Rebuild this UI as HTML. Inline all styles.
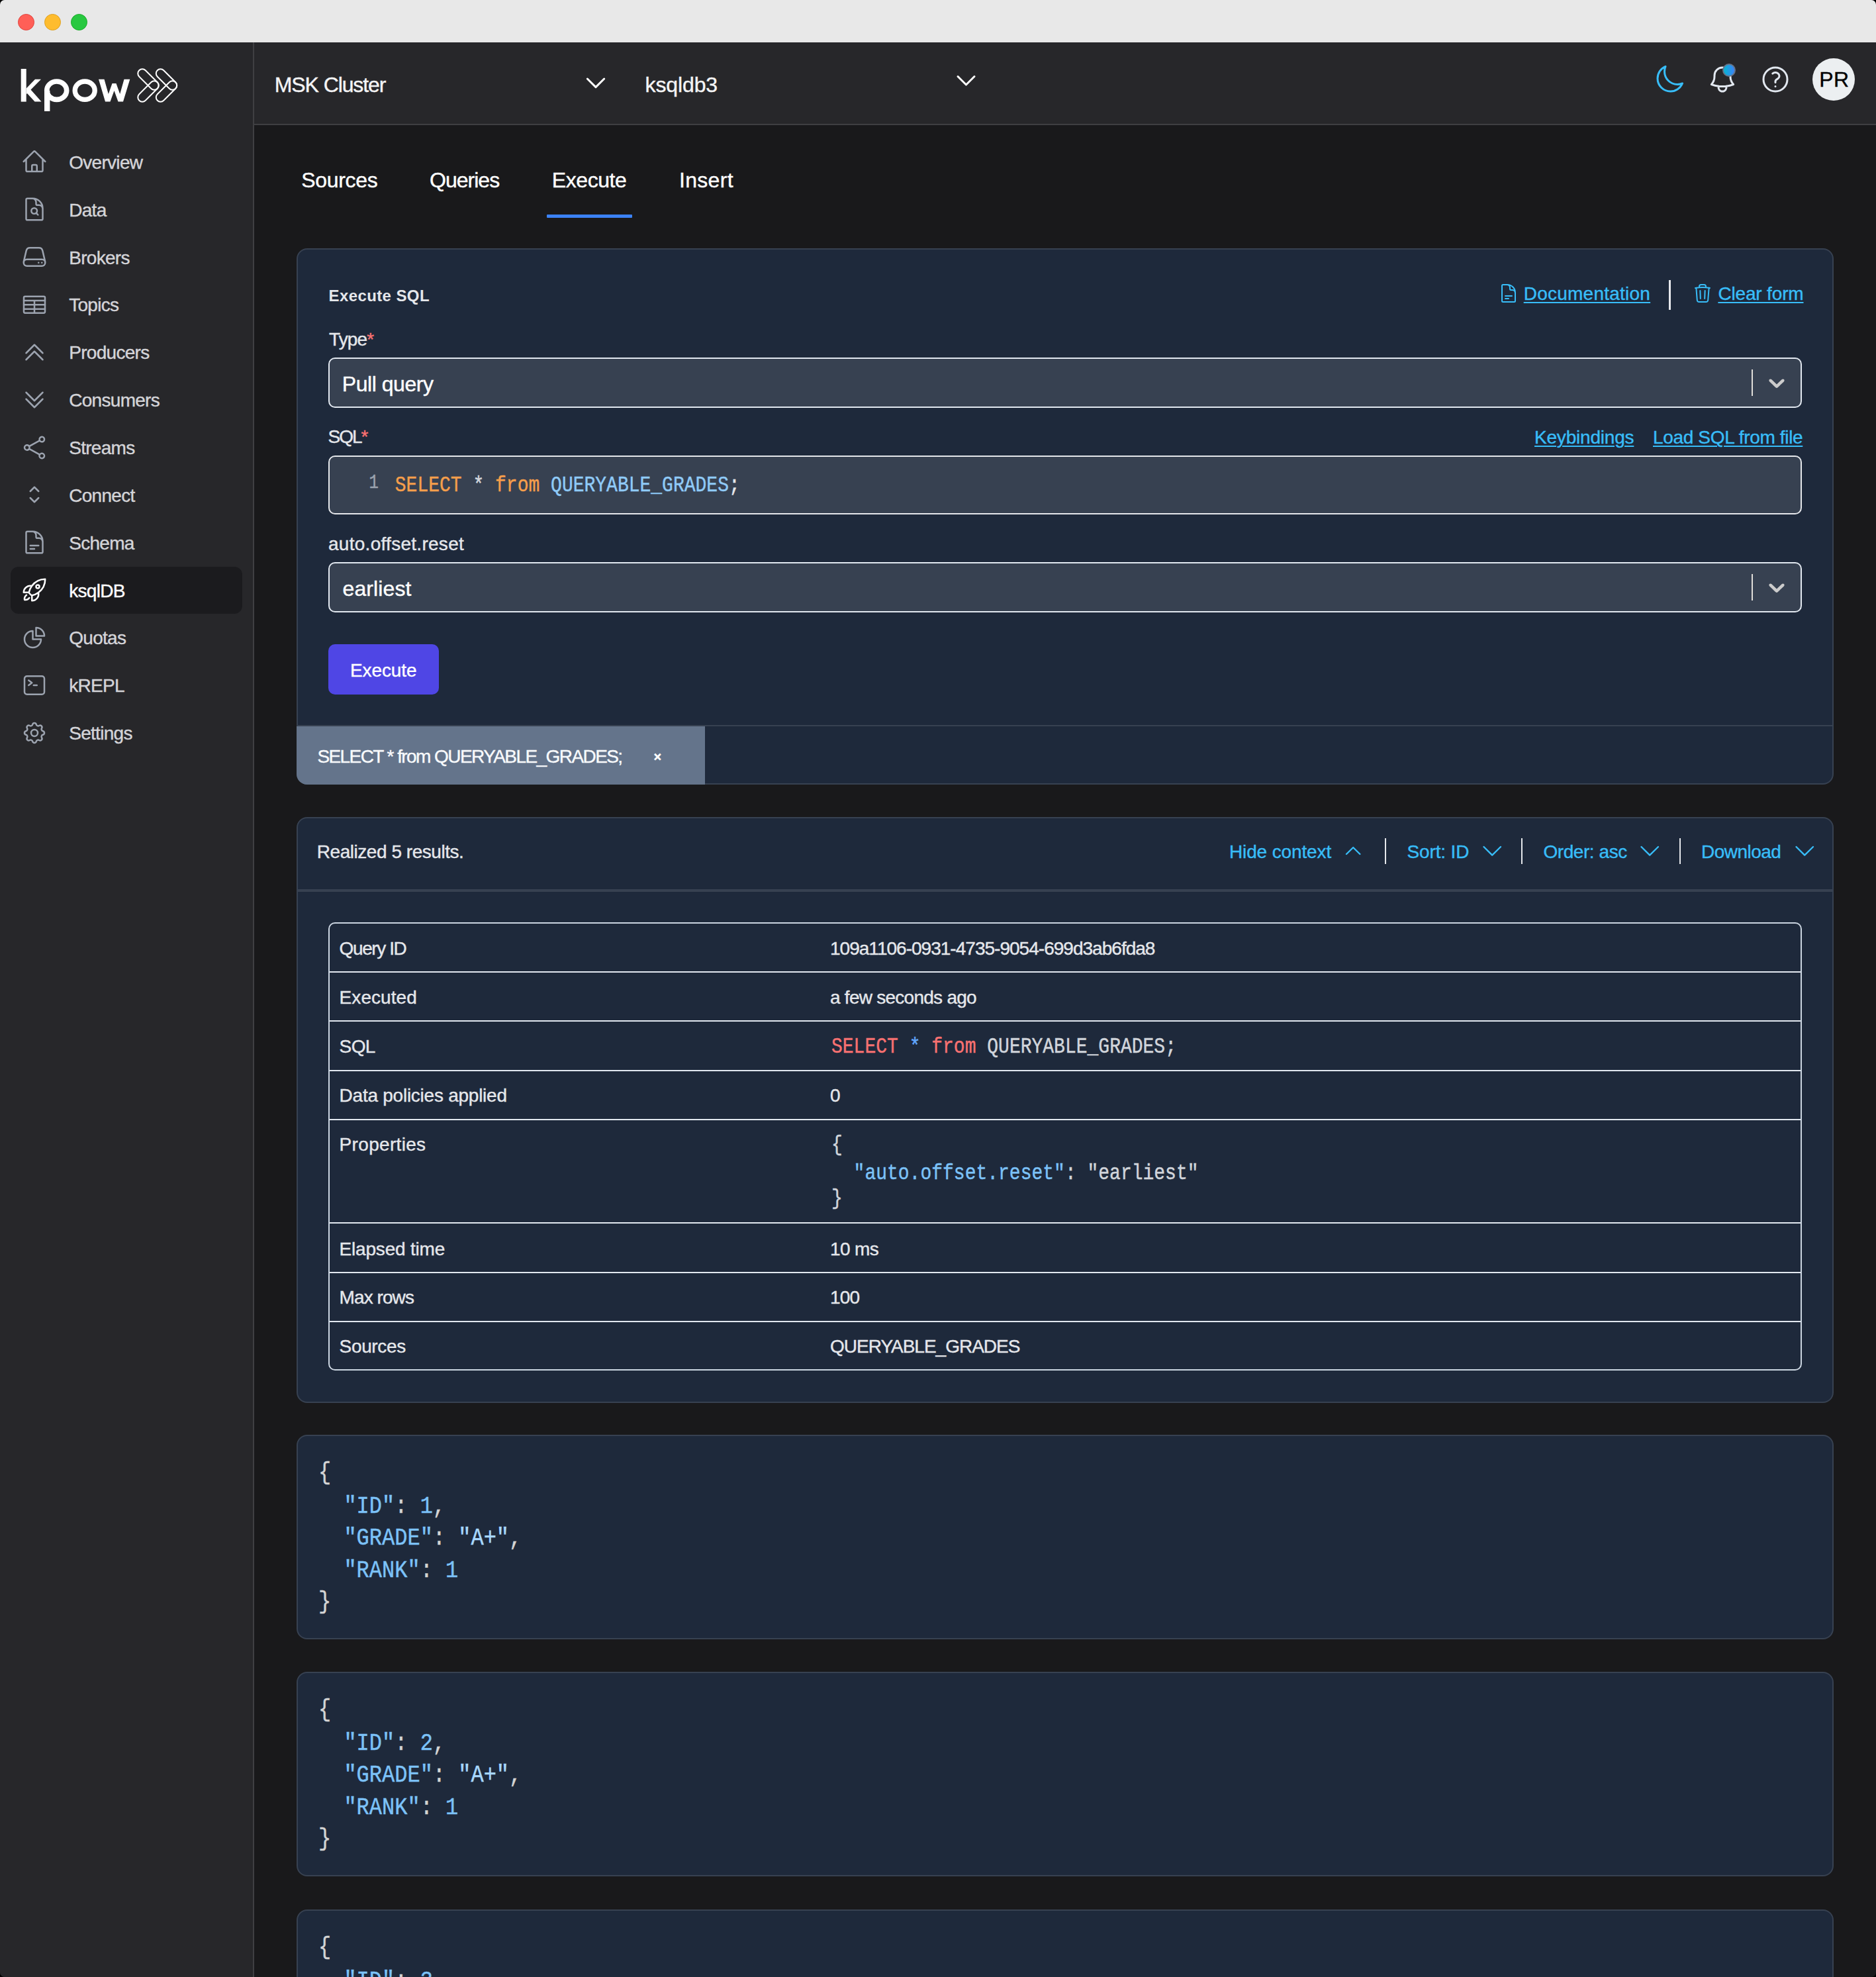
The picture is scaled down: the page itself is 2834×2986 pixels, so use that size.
<!DOCTYPE html>
<html><head><meta charset="utf-8"><title>kpow ksqlDB</title>
<style>
html,body{margin:0;padding:0;}
body{width:2834px;height:2986px;overflow:hidden;background:#000;position:relative;font-family:'Liberation Sans', sans-serif;}
.t{position:absolute;white-space:pre;line-height:1;-webkit-text-stroke:0.4px currentColor;}
.r{position:absolute;box-sizing:border-box;}
</style></head><body>
<div class="r" style="left:0px;top:0px;width:2834px;height:2986px;background:#19191b;border-radius:7px;overflow:hidden;"></div><div class="r" style="left:0px;top:0px;width:2834px;height:64px;background:#e8e8e8;border-radius:7px 7px 0 0;"></div><div class="r" style="left:27px;top:21.0px;width:25px;height:25.0px;background:#ff5f57;border-radius:50%;border:1px solid #e0443e;"></div><div class="r" style="left:67px;top:21.0px;width:25px;height:25.0px;background:#febc2e;border-radius:50%;border:1px solid #dea123;"></div><div class="r" style="left:107px;top:21.0px;width:25px;height:25.0px;background:#28c840;border-radius:50%;border:1px solid #1aab29;"></div><div class="r" style="left:0px;top:64px;width:384px;height:2922px;background:#27272a;border-right:2px solid #3f3f42;border-bottom-left-radius:7px;"></div><div class="r" style="left:384px;top:64px;width:2450px;height:125px;background:#27272a;border-bottom:2px solid #3f3f42;"></div><div class="r" style="left:16px;top:856px;width:350px;height:71px;background:#1b1b1e;border-radius:12px;"></div><div class="t" style="left:104.2px;top:231.9px;font-size:28px;color:#d4d4d8;font-weight:400;font-family:'Liberation Sans', sans-serif;letter-spacing:-0.70px;">Overview</div><div class="t" style="left:104.2px;top:303.7px;font-size:28px;color:#d4d4d8;font-weight:400;font-family:'Liberation Sans', sans-serif;letter-spacing:-0.70px;">Data</div><div class="t" style="left:104.2px;top:375.6px;font-size:28px;color:#d4d4d8;font-weight:400;font-family:'Liberation Sans', sans-serif;letter-spacing:-0.70px;">Brokers</div><div class="t" style="left:104.2px;top:447.4px;font-size:28px;color:#d4d4d8;font-weight:400;font-family:'Liberation Sans', sans-serif;letter-spacing:-0.70px;">Topics</div><div class="t" style="left:104.2px;top:519.3px;font-size:28px;color:#d4d4d8;font-weight:400;font-family:'Liberation Sans', sans-serif;letter-spacing:-0.70px;">Producers</div><div class="t" style="left:104.2px;top:591.1px;font-size:28px;color:#d4d4d8;font-weight:400;font-family:'Liberation Sans', sans-serif;letter-spacing:-0.70px;">Consumers</div><div class="t" style="left:104.2px;top:663.0px;font-size:28px;color:#d4d4d8;font-weight:400;font-family:'Liberation Sans', sans-serif;letter-spacing:-0.70px;">Streams</div><div class="t" style="left:104.2px;top:734.8px;font-size:28px;color:#d4d4d8;font-weight:400;font-family:'Liberation Sans', sans-serif;letter-spacing:-0.70px;">Connect</div><div class="t" style="left:104.2px;top:806.7px;font-size:28px;color:#d4d4d8;font-weight:400;font-family:'Liberation Sans', sans-serif;letter-spacing:-0.70px;">Schema</div><div class="t" style="left:104.2px;top:878.5px;font-size:28px;color:#ffffff;font-weight:400;font-family:'Liberation Sans', sans-serif;letter-spacing:-0.70px;">ksqlDB</div><div class="t" style="left:104.2px;top:950.4px;font-size:28px;color:#d4d4d8;font-weight:400;font-family:'Liberation Sans', sans-serif;letter-spacing:-0.70px;">Quotas</div><div class="t" style="left:104.2px;top:1022.2px;font-size:28px;color:#d4d4d8;font-weight:400;font-family:'Liberation Sans', sans-serif;letter-spacing:-0.70px;">kREPL</div><div class="t" style="left:104.2px;top:1094.1px;font-size:28px;color:#d4d4d8;font-weight:400;font-family:'Liberation Sans', sans-serif;letter-spacing:-0.70px;">Settings</div><div class="t" style="left:414.8px;top:111.9px;font-size:32px;color:#f4f4f5;font-weight:400;font-family:'Liberation Sans', sans-serif;letter-spacing:-1.10px;">MSK Cluster</div><div class="t" style="left:974.6px;top:111.9px;font-size:32px;color:#f4f4f5;font-weight:400;font-family:'Liberation Sans', sans-serif;letter-spacing:-0.13px;">ksqldb3</div><div class="t" style="left:455.3px;top:255.5px;font-size:32px;color:#ffffff;font-weight:400;font-family:'Liberation Sans', sans-serif;letter-spacing:-0.33px;">Sources</div><div class="t" style="left:649px;top:255.5px;font-size:32px;color:#ffffff;font-weight:400;font-family:'Liberation Sans', sans-serif;letter-spacing:-0.98px;">Queries</div><div class="t" style="left:833.8px;top:255.5px;font-size:32px;color:#ffffff;font-weight:400;font-family:'Liberation Sans', sans-serif;letter-spacing:-0.43px;">Execute</div><div class="t" style="left:1026px;top:255.5px;font-size:32px;color:#ffffff;font-weight:400;font-family:'Liberation Sans', sans-serif;letter-spacing:0.30px;">Insert</div><div class="r" style="left:826px;top:324px;width:129px;height:5px;background:#3b82f6;border-radius:1px;"></div><div class="r" style="left:448px;top:375px;width:2322px;height:810px;background:#1e293b;border:2px solid #374151;border-radius:16px;overflow:hidden;"></div><div class="t" style="left:496.5px;top:434.7px;font-size:24px;color:#e5e7eb;font-weight:700;font-family:'Liberation Sans', sans-serif;letter-spacing:0.40px;-webkit-text-stroke:0;">Execute SQL</div><div class="t" style="left:2301.7px;top:430.3px;font-size:28px;color:#38bdf8;font-weight:400;font-family:'Liberation Sans', sans-serif;letter-spacing:0.24px;text-decoration:underline;text-underline-offset:3px;text-decoration-thickness:2px;">Documentation</div><div class="r" style="left:2521px;top:423px;width:3px;height:45px;background:#e5e7eb;"></div><div class="t" style="left:2595.4px;top:430.3px;font-size:28px;color:#38bdf8;font-weight:400;font-family:'Liberation Sans', sans-serif;letter-spacing:-0.16px;text-decoration:underline;text-underline-offset:3px;text-decoration-thickness:2px;">Clear form</div><div class="t" style="left:497px;top:499.3px;font-size:28px;color:#e5e7eb;font-weight:400;font-family:'Liberation Sans', sans-serif;letter-spacing:-0.85px;">Type<span style="color:#f87171">*</span></div><div class="r" style="left:496px;top:540px;width:2226px;height:76px;background:#374151;border:2px solid #e2e8f0;border-radius:10px;"></div><div class="t" style="left:516.8px;top:563.9px;font-size:32px;color:#ffffff;font-weight:400;font-family:'Liberation Sans', sans-serif;letter-spacing:-0.46px;">Pull query</div><div class="r" style="left:2646px;top:558px;width:2px;height:40px;background:#e0ded9;"></div><div class="t" style="left:495.5px;top:646.3px;font-size:28px;color:#e5e7eb;font-weight:400;font-family:'Liberation Sans', sans-serif;letter-spacing:-2.00px;">SQL<span style="color:#f87171">*</span></div><div class="t" style="left:2318px;top:647.3px;font-size:28px;color:#38bdf8;font-weight:400;font-family:'Liberation Sans', sans-serif;letter-spacing:-0.20px;text-decoration:underline;text-underline-offset:3px;text-decoration-thickness:2px;">Keybindings</div><div class="t" style="left:2497px;top:647.3px;font-size:28px;color:#38bdf8;font-weight:400;font-family:'Liberation Sans', sans-serif;letter-spacing:-0.34px;text-decoration:underline;text-underline-offset:3px;text-decoration-thickness:2px;">Load SQL from file</div><div class="r" style="left:496px;top:688px;width:2226px;height:89px;background:#374151;border:2px solid #e5e7eb;border-radius:10px;"></div><div class="t" style="left:557.5px;top:718.6px;font-size:24px;color:#9ca3af;font-weight:400;font-family:'Liberation Mono', monospace;letter-spacing:0.00px;transform:scaleY(1.2);transform-origin:0 18.38px;">1</div><div class="t" style="left:596.8px;top:721.1px;font-size:28px;color:#e5e7eb;font-weight:400;font-family:'Liberation Mono', monospace;letter-spacing:0.00px;transform:scaleY(1.2);transform-origin:0 21.45px;"><span style="color:#f59e4b">SELECT</span> <span style="color:#d1d5db">*</span> <span style="color:#f59e4b">from</span> <span style="color:#8fcaf7">QUERYABLE_GRADES</span>;</div><div class="t" style="left:496px;top:808.3px;font-size:28px;color:#e5e7eb;font-weight:400;font-family:'Liberation Sans', sans-serif;letter-spacing:0.28px;">auto.offset.reset</div><div class="r" style="left:496px;top:849px;width:2226px;height:76px;background:#374151;border:2px solid #e2e8f0;border-radius:10px;"></div><div class="t" style="left:517.6px;top:872.9px;font-size:32px;color:#ffffff;font-weight:400;font-family:'Liberation Sans', sans-serif;letter-spacing:0.09px;">earliest</div><div class="r" style="left:2646px;top:867px;width:2px;height:40px;background:#e0ded9;"></div><div class="r" style="left:496px;top:973px;width:167px;height:76px;background:#4f46e5;border-radius:10px;"></div><div class="t" style="left:529px;top:998.8px;font-size:28px;color:#ffffff;font-weight:400;font-family:'Liberation Sans', sans-serif;letter-spacing:-0.10px;">Execute</div><div class="r" style="left:450px;top:1095px;width:2318px;height:2px;background:#374151;"></div><div class="r" style="left:448px;top:1097px;width:617px;height:88px;background:#64748b;border-bottom-left-radius:16px;"></div><div class="t" style="left:479.4px;top:1129.3px;font-size:28px;color:#f8fafc;font-weight:400;font-family:'Liberation Sans', sans-serif;letter-spacing:-1.57px;">SELECT * from QUERYABLE_GRADES;</div><div class="t" style="left:987.6px;top:1133.1px;font-size:20px;color:#ffffff;font-weight:700;font-family:'Liberation Sans', sans-serif;letter-spacing:0.00px;">×</div><div class="r" style="left:448px;top:1234px;width:2322px;height:885px;background:#1e293b;border:2px solid #374151;border-radius:16px;"></div><div class="t" style="left:478.8px;top:1272.9px;font-size:28px;color:#e5e7eb;font-weight:400;font-family:'Liberation Sans', sans-serif;letter-spacing:-0.46px;">Realized 5 results.</div><div class="r" style="left:450px;top:1343px;width:2318px;height:4px;background:#374151;"></div><div class="t" style="left:1857px;top:1273.3px;font-size:28px;color:#38bdf8;font-weight:400;font-family:'Liberation Sans', sans-serif;letter-spacing:-0.13px;">Hide context</div><div class="t" style="left:2125.5px;top:1273.3px;font-size:28px;color:#38bdf8;font-weight:400;font-family:'Liberation Sans', sans-serif;letter-spacing:-0.14px;">Sort: ID</div><div class="t" style="left:2331.4px;top:1273.3px;font-size:28px;color:#38bdf8;font-weight:400;font-family:'Liberation Sans', sans-serif;letter-spacing:-0.42px;">Order: asc</div><div class="t" style="left:2570px;top:1273.3px;font-size:28px;color:#38bdf8;font-weight:400;font-family:'Liberation Sans', sans-serif;letter-spacing:-0.53px;">Download</div><div class="r" style="left:2091.5px;top:1266px;width:2.0px;height:39px;background:#e5e7eb;"></div><div class="r" style="left:2297.5px;top:1266px;width:2.0px;height:39px;background:#e5e7eb;"></div><div class="r" style="left:2536.5px;top:1266px;width:2.0px;height:39px;background:#e5e7eb;"></div><div class="r" style="left:496px;top:1393px;width:2226px;height:677px;border:2px solid #cbd5e1;border-radius:10px;"></div><div class="r" style="left:498px;top:1467px;width:2222px;height:2px;background:#e2e8f0;"></div><div class="r" style="left:498px;top:1541px;width:2222px;height:2px;background:#e2e8f0;"></div><div class="r" style="left:498px;top:1616px;width:2222px;height:2px;background:#e2e8f0;"></div><div class="r" style="left:498px;top:1690px;width:2222px;height:2px;background:#e2e8f0;"></div><div class="r" style="left:498px;top:1846px;width:2222px;height:2px;background:#e2e8f0;"></div><div class="r" style="left:498px;top:1921px;width:2222px;height:2px;background:#e2e8f0;"></div><div class="r" style="left:498px;top:1995px;width:2222px;height:2px;background:#e2e8f0;"></div><div class="t" style="left:512.6px;top:1419.3px;font-size:28px;color:#e5e7eb;font-weight:400;font-family:'Liberation Sans', sans-serif;letter-spacing:-1.41px;">Query ID</div><div class="t" style="left:1254px;top:1419.3px;font-size:28px;color:#e5e7eb;font-weight:400;font-family:'Liberation Sans', sans-serif;letter-spacing:-0.98px;">109a1106-0931-4735-9054-699d3ab6fda8</div><div class="t" style="left:512.6px;top:1493.3px;font-size:28px;color:#e5e7eb;font-weight:400;font-family:'Liberation Sans', sans-serif;letter-spacing:0.07px;">Executed</div><div class="t" style="left:1254px;top:1493.3px;font-size:28px;color:#e5e7eb;font-weight:400;font-family:'Liberation Sans', sans-serif;letter-spacing:-0.74px;">a few seconds ago</div><div class="t" style="left:512.6px;top:1567.3px;font-size:28px;color:#e5e7eb;font-weight:400;font-family:'Liberation Sans', sans-serif;letter-spacing:-0.60px;">SQL</div><div class="t" style="left:512.6px;top:1641.3px;font-size:28px;color:#e5e7eb;font-weight:400;font-family:'Liberation Sans', sans-serif;letter-spacing:-0.25px;">Data policies applied</div><div class="t" style="left:1254px;top:1641.3px;font-size:28px;color:#e5e7eb;font-weight:400;font-family:'Liberation Sans', sans-serif;letter-spacing:-0.60px;">0</div><div class="t" style="left:512.6px;top:1715.3px;font-size:28px;color:#e5e7eb;font-weight:400;font-family:'Liberation Sans', sans-serif;letter-spacing:0.32px;">Properties</div><div class="t" style="left:512.6px;top:1872.9px;font-size:28px;color:#e5e7eb;font-weight:400;font-family:'Liberation Sans', sans-serif;letter-spacing:-0.20px;">Elapsed time</div><div class="t" style="left:1254px;top:1872.9px;font-size:28px;color:#e5e7eb;font-weight:400;font-family:'Liberation Sans', sans-serif;letter-spacing:-0.60px;">10 ms</div><div class="t" style="left:512.6px;top:1946.3px;font-size:28px;color:#e5e7eb;font-weight:400;font-family:'Liberation Sans', sans-serif;letter-spacing:-0.93px;">Max rows</div><div class="t" style="left:1254px;top:1946.3px;font-size:28px;color:#e5e7eb;font-weight:400;font-family:'Liberation Sans', sans-serif;letter-spacing:-0.80px;">100</div><div class="t" style="left:512.6px;top:2020.3px;font-size:28px;color:#e5e7eb;font-weight:400;font-family:'Liberation Sans', sans-serif;letter-spacing:-0.35px;">Sources</div><div class="t" style="left:1254px;top:2020.3px;font-size:28px;color:#e5e7eb;font-weight:400;font-family:'Liberation Sans', sans-serif;letter-spacing:-1.00px;">QUERYABLE_GRADES</div><div class="t" style="left:1256px;top:1568.6px;font-size:28px;color:#d1d5db;font-weight:400;font-family:'Liberation Mono', monospace;letter-spacing:0.00px;transform:scaleY(1.2);transform-origin:0 21.45px;"><span style="color:#f87171">SELECT</span> <span style="color:#60a5fa">*</span> <span style="color:#f87171">from</span> <span style="color:#d1d5db">QUERYABLE_GRADES</span>;</div><div class="t" style="left:1256px;top:1717.3px;font-size:28px;color:#d1d5db;font-weight:400;font-family:'Liberation Mono', monospace;letter-spacing:0.00px;transform:scaleY(1.2);transform-origin:0 21.45px;">{</div><div class="t" style="left:1256px;top:1759.6px;font-size:28px;color:#d1d5db;font-weight:400;font-family:'Liberation Mono', monospace;letter-spacing:0.00px;transform:scaleY(1.2);transform-origin:0 21.45px;">  <span style="color:#7cc2f8">"auto.offset.reset"</span>: <span style="color:#d1d5db">"earliest"</span></div><div class="t" style="left:1256px;top:1797.6px;font-size:28px;color:#d1d5db;font-weight:400;font-family:'Liberation Mono', monospace;letter-spacing:0.00px;transform:scaleY(1.2);transform-origin:0 21.45px;">}</div><div class="r" style="left:448px;top:2167px;width:2322px;height:309px;background:#1e293b;border:2px solid #374151;border-radius:16px;"></div><div class="t" style="left:481px;top:2210.0px;font-size:32px;color:#d4d4d4;font-weight:400;font-family:'Liberation Mono', monospace;letter-spacing:0.00px;transform:scaleY(1.14);transform-origin:0 24.51px;">{</div><div class="t" style="left:481px;top:2260.7px;font-size:32px;color:#d4d4d4;font-weight:400;font-family:'Liberation Mono', monospace;letter-spacing:0.00px;transform:scaleY(1.14);transform-origin:0 24.51px;">  <span style="color:#7cc2f8">"ID"</span>: <span style="color:#7cc2f8">1</span>,</div><div class="t" style="left:481px;top:2309.4px;font-size:32px;color:#d4d4d4;font-weight:400;font-family:'Liberation Mono', monospace;letter-spacing:0.00px;transform:scaleY(1.14);transform-origin:0 24.51px;">  <span style="color:#7cc2f8">"GRADE"</span>: <span style="color:#a8d8ff">"A+"</span>,</div><div class="t" style="left:481px;top:2358.1px;font-size:32px;color:#d4d4d4;font-weight:400;font-family:'Liberation Mono', monospace;letter-spacing:0.00px;transform:scaleY(1.14);transform-origin:0 24.51px;">  <span style="color:#7cc2f8">"RANK"</span>: <span style="color:#7cc2f8">1</span></div><div class="t" style="left:481px;top:2404.8px;font-size:32px;color:#d4d4d4;font-weight:400;font-family:'Liberation Mono', monospace;letter-spacing:0.00px;transform:scaleY(1.14);transform-origin:0 24.51px;">}</div><div class="r" style="left:448px;top:2525px;width:2322px;height:309px;background:#1e293b;border:2px solid #374151;border-radius:16px;"></div><div class="t" style="left:481px;top:2568.0px;font-size:32px;color:#d4d4d4;font-weight:400;font-family:'Liberation Mono', monospace;letter-spacing:0.00px;transform:scaleY(1.14);transform-origin:0 24.51px;">{</div><div class="t" style="left:481px;top:2618.7px;font-size:32px;color:#d4d4d4;font-weight:400;font-family:'Liberation Mono', monospace;letter-spacing:0.00px;transform:scaleY(1.14);transform-origin:0 24.51px;">  <span style="color:#7cc2f8">"ID"</span>: <span style="color:#7cc2f8">2</span>,</div><div class="t" style="left:481px;top:2667.4px;font-size:32px;color:#d4d4d4;font-weight:400;font-family:'Liberation Mono', monospace;letter-spacing:0.00px;transform:scaleY(1.14);transform-origin:0 24.51px;">  <span style="color:#7cc2f8">"GRADE"</span>: <span style="color:#a8d8ff">"A+"</span>,</div><div class="t" style="left:481px;top:2716.1px;font-size:32px;color:#d4d4d4;font-weight:400;font-family:'Liberation Mono', monospace;letter-spacing:0.00px;transform:scaleY(1.14);transform-origin:0 24.51px;">  <span style="color:#7cc2f8">"RANK"</span>: <span style="color:#7cc2f8">1</span></div><div class="t" style="left:481px;top:2762.8px;font-size:32px;color:#d4d4d4;font-weight:400;font-family:'Liberation Mono', monospace;letter-spacing:0.00px;transform:scaleY(1.14);transform-origin:0 24.51px;">}</div><div class="r" style="left:448px;top:2884px;width:2322px;height:309px;background:#1e293b;border:2px solid #374151;border-radius:16px;"></div><div class="t" style="left:481px;top:2927.0px;font-size:32px;color:#d4d4d4;font-weight:400;font-family:'Liberation Mono', monospace;letter-spacing:0.00px;transform:scaleY(1.14);transform-origin:0 24.51px;">{</div><div class="t" style="left:481px;top:2977.7px;font-size:32px;color:#d4d4d4;font-weight:400;font-family:'Liberation Mono', monospace;letter-spacing:0.00px;transform:scaleY(1.14);transform-origin:0 24.51px;">  <span style="color:#7cc2f8">"ID"</span>: <span style="color:#7cc2f8">3</span>,</div><div class="t" style="left:481px;top:3026.4px;font-size:32px;color:#d4d4d4;font-weight:400;font-family:'Liberation Mono', monospace;letter-spacing:0.00px;transform:scaleY(1.14);transform-origin:0 24.51px;">  <span style="color:#7cc2f8">"GRADE"</span>: <span style="color:#a8d8ff">"A+"</span>,</div><div class="t" style="left:481px;top:3075.1px;font-size:32px;color:#d4d4d4;font-weight:400;font-family:'Liberation Mono', monospace;letter-spacing:0.00px;transform:scaleY(1.14);transform-origin:0 24.51px;">  <span style="color:#7cc2f8">"RANK"</span>: <span style="color:#7cc2f8">1</span></div><div class="t" style="left:481px;top:3121.8px;font-size:32px;color:#d4d4d4;font-weight:400;font-family:'Liberation Mono', monospace;letter-spacing:0.00px;transform:scaleY(1.14);transform-origin:0 24.51px;">}</div><svg class="r" style="left:31.5px;top:224.4px;width:40px;height:40px;" viewBox="0 0 24 24"><g fill="none" stroke="#9ca3af" stroke-width="1.5" stroke-linecap="round" stroke-linejoin="round"><path d="m2.25 12 8.954-8.955c.44-.439 1.152-.439 1.591 0L21.75 12M4.5 9.75v10.125c0 .621.504 1.125 1.125 1.125H9.75v-4.875c0-.621.504-1.125 1.125-1.125h2.25c.621 0 1.125.504 1.125 1.125V21h4.125c.621 0 1.125-.504 1.125-1.125V9.75M8.25 21h8.25"/></g></svg><svg class="r" style="left:31.5px;top:296.25px;width:40px;height:40px;" viewBox="0 0 24 24"><g fill="none" stroke="#9ca3af" stroke-width="1.5" stroke-linecap="round" stroke-linejoin="round"><path d="M19.5 14.25v-2.625a3.375 3.375 0 0 0-3.375-3.375h-1.5A1.125 1.125 0 0 1 13.5 7.125v-1.5a3.375 3.375 0 0 0-3.375-3.375H8.25M10.5 2.25H5.625c-.621 0-1.125.504-1.125 1.125v17.25c0 .621.504 1.125 1.125 1.125h12.75c.621 0 1.125-.504 1.125-1.125V11.25a9 9 0 0 0-9-9Z"/><circle cx="11.8" cy="13.5" r="2.6"/><path d="M13.6 15.4 15.2 17.1"/></g></svg><svg class="r" style="left:31.5px;top:368.09999999999997px;width:40px;height:40px;" viewBox="0 0 24 24"><g fill="none" stroke="#9ca3af" stroke-width="1.5" stroke-linecap="round" stroke-linejoin="round"><path d="M21.75 17.25v-.228a4.5 4.5 0 0 0-.12-1.03l-2.268-9.64a3.375 3.375 0 0 0-3.285-2.602H7.923a3.375 3.375 0 0 0-3.285 2.602l-2.268 9.64a4.5 4.5 0 0 0-.12 1.03v.228m19.5 0a3 3 0 0 1-3 3H5.25a3 3 0 0 1-3-3m19.5 0a3 3 0 0 0-3-3H5.25a3 3 0 0 0-3 3m16.5 0h.008v.008h-.008v-.008Zm-3 0h.008v.008h-.008v-.008Z"/></g></svg><svg class="r" style="left:31.5px;top:439.95px;width:40px;height:40px;" viewBox="0 0 24 24"><g fill="none" stroke="#9ca3af" stroke-width="1.5" stroke-linecap="round" stroke-linejoin="round"><rect x="2.4" y="4.6" width="19.2" height="15" rx="1.1"/><path d="M2.4 8.4h19.2M2.4 12.2h19.2M2.4 16h19.2M12 8.4v11.2"/></g></svg><svg class="r" style="left:31.5px;top:511.8px;width:40px;height:40px;" viewBox="0 0 24 24"><g fill="none" stroke="#9ca3af" stroke-width="1.5" stroke-linecap="round" stroke-linejoin="round"><path d="m4.5 12.75 7.5-7.5 7.5 7.5m-15 6 7.5-7.5 7.5 7.5"/></g></svg><svg class="r" style="left:31.5px;top:583.65px;width:40px;height:40px;" viewBox="0 0 24 24"><g fill="none" stroke="#9ca3af" stroke-width="1.5" stroke-linecap="round" stroke-linejoin="round"><path d="m4.5 5.25 7.5 7.5 7.5-7.5m-15 6 7.5 7.5 7.5-7.5"/></g></svg><svg class="r" style="left:31.5px;top:655.4999999999999px;width:40px;height:40px;" viewBox="0 0 24 24"><g fill="none" stroke="#9ca3af" stroke-width="1.5" stroke-linecap="round" stroke-linejoin="round"><path d="M7.217 10.907a2.25 2.25 0 1 0 0 2.186m0-2.186c.18.324.283.696.283 1.093s-.103.77-.283 1.093m0-2.186 9.566-5.314m-9.566 7.5 9.566 5.314m0 0a2.25 2.25 0 1 0 3.935 2.186 2.25 2.25 0 0 0-3.935-2.186Zm0-12.814a2.25 2.25 0 1 0 3.933-2.185 2.25 2.25 0 0 0-3.933 2.185Z"/></g></svg><svg class="r" style="left:31.5px;top:727.3499999999999px;width:40px;height:40px;" viewBox="0 0 24 24"><g fill="none" stroke="#9ca3af" stroke-width="1.5" stroke-linecap="round" stroke-linejoin="round"><path d="M8.25 15 12 18.75 15.75 15m-7.5-6L12 5.25 15.75 9"/></g></svg><svg class="r" style="left:31.5px;top:799.1999999999999px;width:40px;height:40px;" viewBox="0 0 24 24"><g fill="none" stroke="#9ca3af" stroke-width="1.5" stroke-linecap="round" stroke-linejoin="round"><path d="M19.5 14.25v-2.625a3.375 3.375 0 0 0-3.375-3.375h-1.5A1.125 1.125 0 0 1 13.5 7.125v-1.5a3.375 3.375 0 0 0-3.375-3.375H8.25m0 12.75h7.5m-7.5 3H12M10.5 2.25H5.625c-.621 0-1.125.504-1.125 1.125v17.25c0 .621.504 1.125 1.125 1.125h12.75c.621 0 1.125-.504 1.125-1.125V11.25a9 9 0 0 0-9-9Z"/></g></svg><svg class="r" style="left:31.5px;top:871.05px;width:40px;height:40px;" viewBox="0 0 24 24"><g fill="none" stroke="#ffffff" stroke-width="1.5" stroke-linecap="round" stroke-linejoin="round"><path d="M15.59 14.37a6 6 0 0 1-5.84 7.38v-4.8m5.84-2.58a14.98 14.98 0 0 0 6.16-12.12A14.98 14.98 0 0 0 9.631 8.41m5.96 5.96a14.926 14.926 0 0 1-5.841 2.58m-.119-8.54a6 6 0 0 0-7.381 5.84h4.8m2.581-5.84a14.927 14.927 0 0 0-2.58 5.84m2.699 2.7c-.103.021-.207.041-.311.06a15.09 15.09 0 0 1-2.448-2.448 14.9 14.9 0 0 1 .06-.312m-2.24 2.39a4.493 4.493 0 0 0-1.757 4.306 4.493 4.493 0 0 0 4.306-1.758M16.5 9a1.5 1.5 0 1 1-3 0 1.5 1.5 0 0 1 3 0Z"/></g></svg><svg class="r" style="left:31.5px;top:942.9px;width:40px;height:40px;" viewBox="0 0 24 24"><g fill="none" stroke="#9ca3af" stroke-width="1.5" stroke-linecap="round" stroke-linejoin="round"><path d="M10.5 6a7.5 7.5 0 1 0 7.5 7.5h-7.5V6Z"/><path d="M13.5 10.5H21A7.5 7.5 0 0 0 13.5 3v7.5Z"/></g></svg><svg class="r" style="left:31.5px;top:1014.7499999999998px;width:40px;height:40px;" viewBox="0 0 24 24"><g fill="none" stroke="#9ca3af" stroke-width="1.5" stroke-linecap="round" stroke-linejoin="round"><path d="m6.75 7.5 3 2.25-3 2.25m4.5 0h3m-9 8.25h13.5A2.25 2.25 0 0 0 21 18V6a2.25 2.25 0 0 0-2.25-2.25H5.25A2.25 2.25 0 0 0 3 6v12a2.25 2.25 0 0 0 2.25 2.25Z"/></g></svg><svg class="r" style="left:31.5px;top:1086.6px;width:40px;height:40px;" viewBox="0 0 24 24"><g fill="none" stroke="#9ca3af" stroke-width="1.5" stroke-linecap="round" stroke-linejoin="round"><path d="M10.325 4.317c.426-1.756 2.924-1.756 3.35 0a1.724 1.724 0 0 0 2.573 1.066c1.543-.94 3.31.826 2.37 2.37a1.724 1.724 0 0 0 1.065 2.572c1.756.426 1.756 2.924 0 3.35a1.724 1.724 0 0 0-1.066 2.573c.94 1.543-.826 3.31-2.37 2.37a1.724 1.724 0 0 0-2.572 1.065c-.426 1.756-2.924 1.756-3.35 0a1.724 1.724 0 0 0-2.573-1.066c-1.543.94-3.31-.826-2.37-2.37a1.724 1.724 0 0 0-1.065-2.572c-1.756-.426-1.756-2.924 0-3.35a1.724 1.724 0 0 0 1.066-2.573c-.94-1.543.826-3.31 2.37-2.37.996.608 2.296.07 2.572-1.065z"/><path d="M15 12a3 3 0 1 1-6 0 3 3 0 0 1 6 0z"/></g></svg><svg class="r" style="left:0px;top:0px;width:2834px;height:2986px;pointer-events:none;" viewBox="0 0 2834 2986"><polyline points="887.3,119 900,131.6 912.7,119" fill="none" stroke="#ffffff" stroke-width="3" stroke-linecap="round" stroke-linejoin="round"/></svg><svg class="r" style="left:0px;top:0px;width:2834px;height:2986px;pointer-events:none;" viewBox="0 0 2834 2986"><polyline points="1447,115.5 1459.5,128 1472,115.5" fill="none" stroke="#ffffff" stroke-width="3" stroke-linecap="round" stroke-linejoin="round"/></svg><svg class="r" style="left:2497.8px;top:95.7px;width:48px;height:48px;" viewBox="0 0 24 24"><g fill="none" stroke="#38bdf8" stroke-width="1.5" stroke-linecap="round" stroke-linejoin="round"><path d="M21.752 15.002A9.72 9.72 0 0 1 18 15.75c-5.385 0-9.75-4.365-9.75-9.75 0-1.33.266-2.597.748-3.752A9.753 9.753 0 0 0 3 11.25C3 16.635 7.365 21 12.75 21a9.753 9.753 0 0 0 9.002-5.998Z"/></g></svg><svg class="r" style="left:2578.1px;top:95.5px;width:48px;height:48px;" viewBox="0 0 24 24"><g fill="none" stroke="#e2e8f0" stroke-width="1.5" stroke-linecap="round" stroke-linejoin="round"><path d="M14.857 17.082a23.848 23.848 0 0 0 5.454-1.31A8.967 8.967 0 0 1 18 9.75V9A6 6 0 0 0 6 9v.75a8.967 8.967 0 0 1-2.312 6.022c1.733.64 3.56 1.085 5.455 1.31m5.714 0a24.255 24.255 0 0 1-5.714 0m5.714 0a3 3 0 1 1-5.714 0"/></g></svg><div class="r" style="left:2602px;top:96px;width:20px;height:20px;background:linear-gradient(90deg,#06b6d4,#3b82f6);border:2px solid #64748b;border-radius:50%;"></div><svg class="r" style="left:2658.1px;top:95.5px;width:48px;height:48px;" viewBox="0 0 24 24"><g fill="none" stroke="#e2e8f0" stroke-width="1.5" stroke-linecap="round" stroke-linejoin="round"><path d="M9.879 7.519c1.171-1.025 3.071-1.025 4.242 0 1.172 1.025 1.172 2.687 0 3.712-.203.179-.43.326-.67.442-.745.361-1.45.999-1.45 1.827v.75M21 12a9 9 0 1 1-18 0 9 9 0 0 1 18 0Zm-9 5.25h.008v.008H12v-.008Z"/></g></svg><div class="r" style="left:2738px;top:88px;width:64px;height:64px;background:#eceff1;border-radius:50%;"></div><div class="t" style="left:2748.3px;top:104.3px;font-size:32px;color:#000000;font-weight:400;font-family:'Liberation Sans', sans-serif;letter-spacing:0.30px;">PR</div><svg class="r" style="left:2263px;top:427px;width:32px;height:32px;" viewBox="0 0 24 24"><g fill="none" stroke="#38bdf8" stroke-width="1.5" stroke-linecap="round" stroke-linejoin="round"><path d="M19.5 14.25v-2.625a3.375 3.375 0 0 0-3.375-3.375h-1.5A1.125 1.125 0 0 1 13.5 7.125v-1.5a3.375 3.375 0 0 0-3.375-3.375H8.25m0 12.75h7.5m-7.5 3H12M10.5 2.25H5.625c-.621 0-1.125.504-1.125 1.125v17.25c0 .621.504 1.125 1.125 1.125h12.75c.621 0 1.125-.504 1.125-1.125V11.25a9 9 0 0 0-9-9Z"/></g></svg><svg class="r" style="left:2556.4px;top:427px;width:32px;height:32px;" viewBox="0 0 24 24"><g fill="none" stroke="#38bdf8" stroke-width="1.5" stroke-linecap="round" stroke-linejoin="round"><path d="m14.74 9-.346 9m-4.788 0L9.26 9m9.968-3.21c.342.052.682.107 1.022.166m-1.022-.165L18.16 19.673a2.25 2.25 0 0 1-2.244 2.077H8.084a2.25 2.25 0 0 1-2.244-2.077L4.772 5.79m14.456 0a48.108 48.108 0 0 0-3.478-.397m-12 .562c.34-.059.68-.114 1.022-.165m0 0a48.11 48.11 0 0 1 3.478-.397m7.5 0v-.916c0-1.18-.91-2.164-2.09-2.201a51.964 51.964 0 0 0-3.32 0c-1.18.037-2.09 1.022-2.09 2.201v.916m7.5 0a48.667 48.667 0 0 0-7.5 0"/></g></svg><svg class="r" style="left:2663.6px;top:557.6px;width:40px;height:40px;" viewBox="0 0 20 20"><path fill="#cccccc" d="M4.516 7.548c0.436-0.446 1.043-0.481 1.576 0l3.908 3.747 3.908-3.747c0.533-0.481 1.141-0.446 1.574 0 0.436 0.445 0.408 1.197 0 1.615-0.406 0.418-4.695 4.502-4.695 4.502-0.217 0.223-0.502 0.335-0.787 0.335s-0.57-0.112-0.789-0.335c0 0-4.287-4.084-4.695-4.502s-0.436-1.17 0-1.615z"/></svg><svg class="r" style="left:2663.6px;top:866.6px;width:40px;height:40px;" viewBox="0 0 20 20"><path fill="#cccccc" d="M4.516 7.548c0.436-0.446 1.043-0.481 1.576 0l3.908 3.747 3.908-3.747c0.533-0.481 1.141-0.446 1.574 0 0.436 0.445 0.408 1.197 0 1.615-0.406 0.418-4.695 4.502-4.695 4.502-0.217 0.223-0.502 0.335-0.787 0.335s-0.57-0.112-0.789-0.335c0 0-4.287-4.084-4.695-4.502s-0.436-1.17 0-1.615z"/></svg><svg class="r" style="left:0px;top:0px;width:2834px;height:2986px;pointer-events:none;" viewBox="0 0 2834 2986"><polyline points="2034,1290 2044.2,1280 2054.4,1290" fill="none" stroke="#38bdf8" stroke-width="2.4" stroke-linecap="round" stroke-linejoin="round"/></svg><svg class="r" style="left:0px;top:0px;width:2834px;height:2986px;pointer-events:none;" viewBox="0 0 2834 2986"><polyline points="2241.5,1279 2254.2,1291.6 2267,1279" fill="none" stroke="#38bdf8" stroke-width="2.4" stroke-linecap="round" stroke-linejoin="round"/></svg><svg class="r" style="left:0px;top:0px;width:2834px;height:2986px;pointer-events:none;" viewBox="0 0 2834 2986"><polyline points="2479.5,1279 2492.2,1291.6 2505,1279" fill="none" stroke="#38bdf8" stroke-width="2.4" stroke-linecap="round" stroke-linejoin="round"/></svg><svg class="r" style="left:0px;top:0px;width:2834px;height:2986px;pointer-events:none;" viewBox="0 0 2834 2986"><polyline points="2713.5,1279 2726.2,1291.6 2739,1279" fill="none" stroke="#38bdf8" stroke-width="2.4" stroke-linecap="round" stroke-linejoin="round"/></svg><svg class="r" style="left:0px;top:0px;width:300px;height:200px;" viewBox="0 0 300 200"><g fill="#ffffff">
<rect x="31.7" y="104" width="8" height="49.6"/>
<polygon points="39.7,133.5 53,119.7 62,119.7 46.5,135.5 62.5,153.6 52.5,153.6 41,141 39.7,142.5"/>
<rect x="67" y="136.7" width="8.4" height="31.3"/>
<polygon points="149,119.7 157.5,119.7 163.8,142 169.5,126 175.5,126 181.2,142 187.5,119.7 196.3,119.7 186,153.6 178.5,153.6 172.5,137 166.5,153.6 159,153.6"/>
</g>
<g fill="none" stroke="#ffffff">
<ellipse cx="85.7" cy="136.7" rx="15" ry="13.7" stroke-width="7.6"/>
<ellipse cx="128.2" cy="136.7" rx="15" ry="13.7" stroke-width="7.4"/>

</g>
<g fill="none" stroke="#ffffff" stroke-width="2">
<rect x="204.55" y="113.3" width="38.9" height="13.4" rx="6.7" transform="rotate(45 224 120)"/>
<rect x="204.55" y="131.3" width="38.9" height="13.4" rx="6.7" transform="rotate(-45 224 138)"/>
<rect x="232.05" y="113.3" width="38.9" height="13.4" rx="6.7" transform="rotate(45 251.5 120)"/>
<rect x="232.05" y="131.3" width="38.9" height="13.4" rx="6.7" transform="rotate(-45 251.5 138)"/>
</g></svg>
</body></html>
